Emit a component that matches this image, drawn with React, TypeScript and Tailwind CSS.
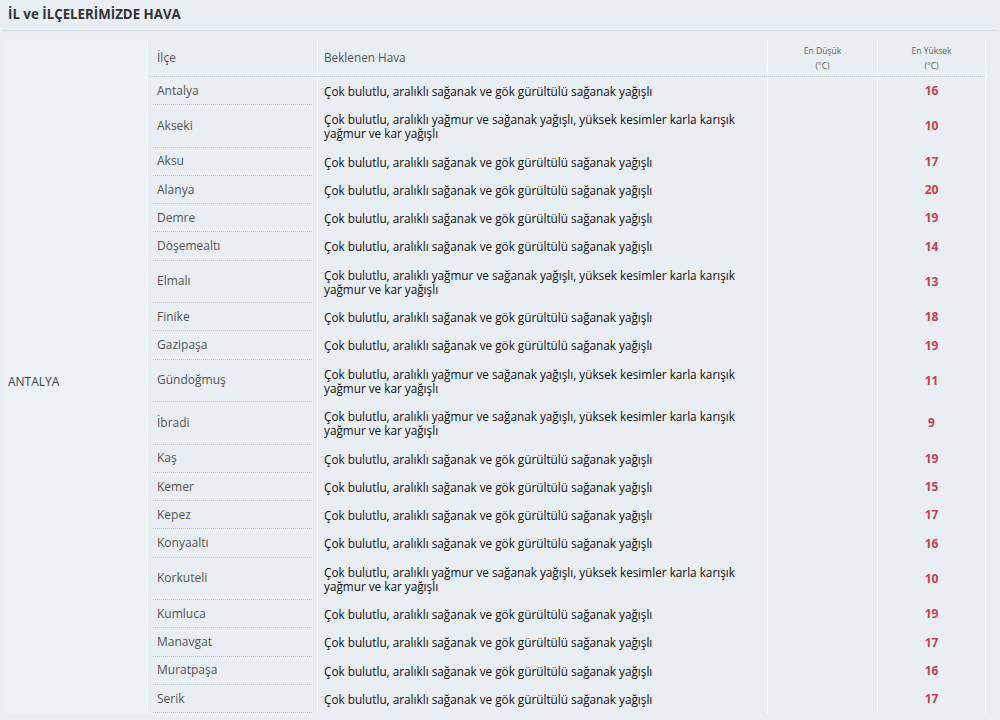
import React from "react";

const A = "Çok bulutlu, aralıklı sağanak ve gök gürültülü sağanak yağışlı";
const B =
  "Çok bulutlu, aralıklı yağmur ve sağanak yağışlı, yüksek kesimler karla karışık yağmur ve kar yağışlı";

const rows: { name: string; text: string; max: number }[] = [
  { name: "Antalya", text: A, max: 16 },
  { name: "Akseki", text: B, max: 10 },
  { name: "Aksu", text: A, max: 17 },
  { name: "Alanya", text: A, max: 20 },
  { name: "Demre", text: A, max: 19 },
  { name: "Döşemealtı", text: A, max: 14 },
  { name: "Elmalı", text: B, max: 13 },
  { name: "Finike", text: A, max: 18 },
  { name: "Gazipaşa", text: A, max: 19 },
  { name: "Gündoğmuş", text: B, max: 11 },
  { name: "İbradi", text: B, max: 9 },
  { name: "Kaş", text: A, max: 19 },
  { name: "Kemer", text: A, max: 15 },
  { name: "Kepez", text: A, max: 17 },
  { name: "Konyaaltı", text: A, max: 16 },
  { name: "Korkuteli", text: B, max: 10 },
  { name: "Kumluca", text: A, max: 19 },
  { name: "Manavgat", text: A, max: 17 },
  { name: "Muratpaşa", text: A, max: 16 },
  { name: "Serik", text: A, max: 17 },
];

export default function App() {
  return (
    <div className="min-h-[720px] w-[1000px] bg-[#e8eef1] font-['Open_Sans',sans-serif] text-[11.75px]">
      <div className="px-[3px] pt-[5px]">
        <h2 className="border-b border-dotted border-[#c9d3d8] px-[5px] pb-[5px] text-[13.3px] font-bold text-[#333]">
          İL ve İLÇELERİMİZDE HAVA
        </h2>
      </div>
      <div className="mt-[9px] ml-[3px] grid w-[983px] grid-cols-[144px_169px_449px_109px_107px] gap-x-px bg-white">
        <div className="row-[span_21/span_21] flex items-center bg-[#edf2f4] pl-[5px] pt-[10px] text-[12px] text-[#444]">
          ANTALYA
        </div>
        <div className="flex h-[37px] items-center border-b border-dotted border-[#c3ccd1] bg-[#e8eef1] pl-[9px] text-[12px] text-[#555]">
          İlçe
        </div>
        <div className="flex h-[37px] items-center border-b border-dotted border-[#c3ccd1] bg-[#e8eef1] pl-[6px] text-[#555]">
          Beklenen Hava
        </div>
        <TempHead label="En Düşük" />
        <TempHead label="En Yüksek" />
        {rows.map((r) => (
          <React.Fragment key={r.name}>
            <div className="bg-[#e8eef1] px-[5px]">
              <div className="flex h-full items-center border-b border-dotted border-[#c3ccd1] pl-[4px] text-[12px] text-[#555]">
                {r.name}
              </div>
            </div>
            <div className="flex items-center bg-[#e8eef1] py-[7px] pl-[6px] pr-[30px] leading-[14.25px] text-[#111]">
              {r.text}
            </div>
            <div className="bg-[#e8eef1]" />
            <div className="flex items-center justify-center bg-[#e8eef1] text-[12px] font-bold text-[#c7414f]">
              {r.max}
            </div>
          </React.Fragment>
        ))}
      </div>
    </div>
  );
}

function TempHead({ label }: { label: string }) {
  return (
    <div className="flex h-[37px] flex-col items-center justify-center border-b border-dotted border-[#c3ccd1] bg-[#e8eef1] text-[8.5px] leading-[15px] text-[#666]">
      <span>{label}</span>
      <span>(°C)</span>
    </div>
  );
}
